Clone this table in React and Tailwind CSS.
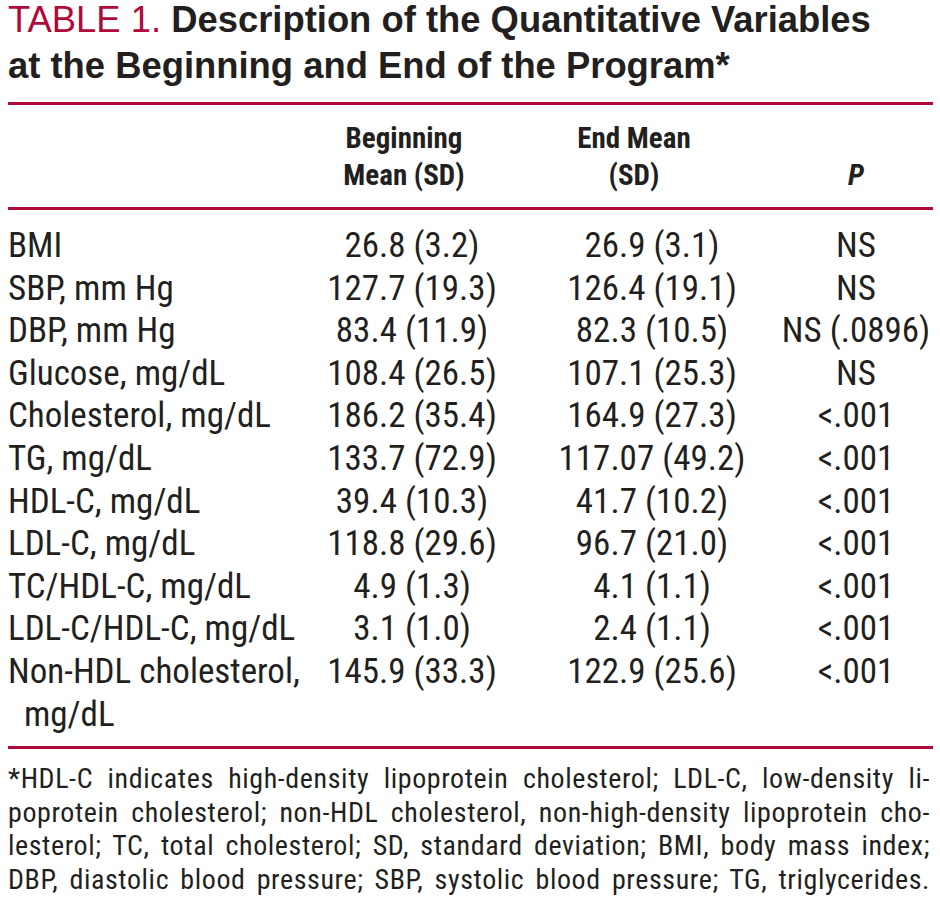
// Table 1 — quantitative variables at the beginning and end of the program

const RULE = "h-[3px] w-[925px] bg-[#b00a3a]";

const rows = [
  ["BMI", "26.8 (3.2)", "26.9 (3.1)", "NS"],
  ["SBP, mm Hg", "127.7 (19.3)", "126.4 (19.1)", "NS"],
  ["DBP, mm Hg", "83.4 (11.9)", "82.3 (10.5)", "NS (.0896)"],
  ["Glucose, mg/dL", "108.4 (26.5)", "107.1 (25.3)", "NS"],
  ["Cholesterol, mg/dL", "186.2 (35.4)", "164.9 (27.3)", "<.001"],
  ["TG, mg/dL", "133.7 (72.9)", "117.07 (49.2)", "<.001"],
  ["HDL-C, mg/dL", "39.4 (10.3)", "41.7 (10.2)", "<.001"],
  ["LDL-C, mg/dL", "118.8 (29.6)", "96.7 (21.0)", "<.001"],
  ["TC/HDL-C, mg/dL", "4.9 (1.3)", "4.1 (1.1)", "<.001"],
  ["LDL-C/HDL-C, mg/dL", "3.1 (1.0)", "2.4 (1.1)", "<.001"],
  ["Non-HDL cholesterol,", "145.9 (33.3)", "122.9 (25.6)", "<.001", "mg/dL"],
];

const footnote = [
  "*HDL-C indicates high-density lipoprotein cholesterol; LDL-C, low-density li-",
  "poprotein cholesterol; non-HDL cholesterol, non-high-density lipoprotein cho-",
  "lesterol; TC, total cholesterol; SD, standard deviation; BMI, body mass index;",
  "DBP, diastolic blood pressure; SBP, systolic blood pressure; TG, triglycerides.",
];

// label | beginning | end | P
const GRID = "grid grid-cols-[312px_184px_296px_112px]";

function Row({ label, begin, end, p, extra }) {
  return (
    <div className={GRID}>
      <div className="whitespace-nowrap">
        {label}
        {extra && <div className="pl-4">{extra}</div>}
      </div>
      <div className="flex justify-center whitespace-nowrap">{begin}</div>
      <div className="flex justify-center whitespace-nowrap">{end}</div>
      <div className="flex justify-center whitespace-nowrap">{p}</div>
    </div>
  );
}

export default function App() {
  return (
    <div className="w-[940px] h-[912px] overflow-hidden bg-white pl-2 text-[#231f20] font-['Roboto_Condensed','DejaVu_Sans_Condensed',sans-serif]">
      {/* Title */}
      <h1 className="-mt-[3px] font-['Liberation_Sans',Arial,sans-serif] text-[36.4px] leading-[46px] font-bold">
        <span className="font-normal text-[#b00a3a]">TABLE 1.</span> Description of the Quantitative Variables
        <br />
        at the Beginning and End of the Program*
      </h1>

      <div className={`mt-[13px] ${RULE}`} />

      {/* Column headers */}
      <div className={`${GRID} pt-[15px] pb-[13px] text-[29px] leading-[37px] font-bold`}>
        <div />
        <div className="flex justify-center pr-4 text-center">
          Beginning
          <br />
          Mean (SD)
        </div>
        <div className="flex justify-center pr-9 text-center">
          End Mean
          <br />
          (SD)
        </div>
        <div className="flex items-end justify-center italic">P</div>
      </div>

      <div className={RULE} />

      {/* Body */}
      <div className="pt-[15px] pb-[10px] text-[35px] leading-[42.6px]">
        {rows.map(([label, begin, end, p, extra]) => (
          <Row key={label} label={label} begin={begin} end={end} p={p} extra={extra} />
        ))}
      </div>

      <div className={RULE} />

      {/* Footnote */}
      <div className="w-[922px] pt-[13px] text-[28px] leading-[33.5px] tracking-[0.6px]">
        {footnote.map((line) => (
          <div key={line} className="text-justify [text-align-last:justify] whitespace-nowrap">
            {line}
          </div>
        ))}
      </div>
    </div>
  );
}
